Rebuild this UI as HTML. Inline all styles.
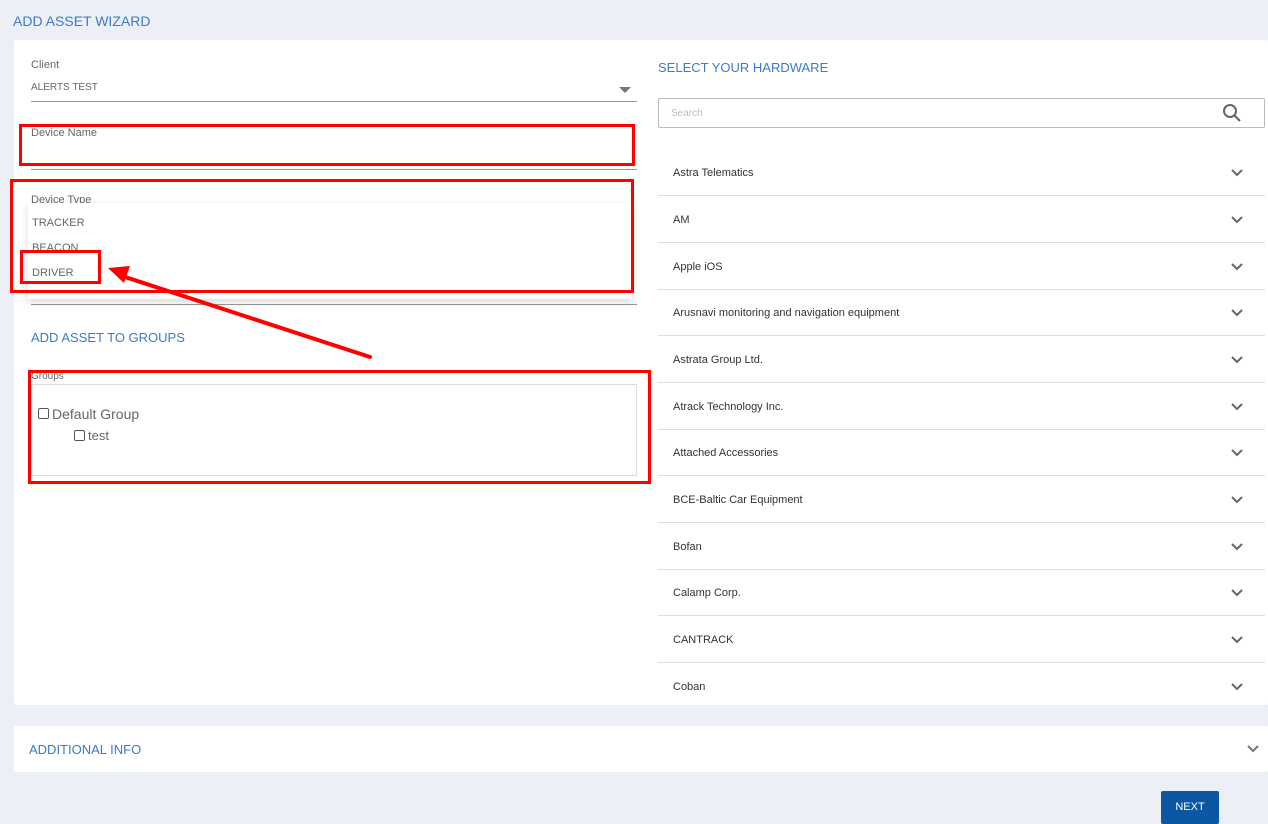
<!DOCTYPE html>
<html><head><style>
*{box-sizing:border-box;margin:0;padding:0}
body{width:1268px;height:824px;background:#eceff6;font-family:"Liberation Sans",sans-serif;position:relative;overflow:hidden;color:#555}
.a{position:absolute}
.blue{color:#3d7bc7}
.lbl{font-size:11px;color:#666}
.row{position:absolute;left:658px;width:607px;height:47px;border-bottom:1px solid #ddd;font-size:11px;color:#333}
.row span{position:absolute;left:15px;top:18px}
.row svg{position:absolute;right:22px;top:20px}
.red{position:absolute;border:3px solid #f00}
</style></head><body>
<div class="a blue" style="left:13px;top:13px;font-size:14px">ADD ASSET WIZARD</div>
<div class="a" style="left:14px;top:40px;width:1254px;height:665px;background:#fff;border-radius:2px"></div>
<div class="a" style="left:14px;top:726px;width:1254px;height:46px;background:#fff;border-radius:2px"></div>
<div class="a blue" style="left:29px;top:742px;font-size:13px">ADDITIONAL INFO</div>
<svg class="a" style="left:1247px;top:745px" width="12" height="8"><path d="M1 1l5 5 5-5" stroke="#777" stroke-width="2" fill="none"/></svg>
<div class="a" style="left:1161px;top:791px;width:58px;height:33px;background:#0b57a4;color:#fff;font-size:11px;text-align:center;line-height:33px;border-radius:2px">NEXT</div>

<div class="a lbl" style="left:31px;top:59px">Client</div>
<div class="a" style="left:31px;top:82px;font-size:10px;color:#666">ALERTS TEST</div>
<svg class="a" style="left:619px;top:87px" width="12" height="7"><path d="M0 0h12L6 6z" fill="#777"/></svg>
<div class="a" style="left:31px;top:101px;width:606px;height:1px;background:#999"></div>
<div class="a lbl" style="left:31px;top:127px">Device Name</div>
<div class="a" style="left:31px;top:169px;width:606px;height:1px;background:#999"></div>
<div class="a lbl" style="left:31px;top:194px">Device Type</div>
<div class="a" style="left:31px;top:304px;width:606px;height:1px;background:#999"></div>
<div class="a" style="left:28px;top:203px;width:604px;height:96px;background:#fff;box-shadow:0 3px 8px rgba(0,0,0,.15)"></div>
<div class="a" style="left:32px;top:217px;font-size:11px;color:#666">TRACKER</div>
<div class="a" style="left:32px;top:242px;font-size:11px;color:#666">BEACON</div>
<div class="a" style="left:32px;top:267px;font-size:11px;color:#666">DRIVER</div>
<div class="a blue" style="left:31px;top:330px;font-size:13px">ADD ASSET TO GROUPS</div>
<div class="a lbl" style="left:31px;top:371px;font-size:10px">Groups</div>
<div class="a" style="left:31px;top:384px;width:606px;height:92px;border:1px solid #ddd"></div>
<div class="a" style="left:38px;top:408px;width:11px;height:11px;border:1px solid #555;border-radius:2px"></div>
<div class="a" style="left:52px;top:406px;font-size:14px;color:#666">Default Group</div>
<div class="a" style="left:74px;top:430px;width:11px;height:11px;border:1px solid #555;border-radius:2px"></div>
<div class="a" style="left:88px;top:428px;font-size:13px;color:#666">test</div>

<div class="red" style="left:19px;top:124px;width:616px;height:42px"></div>
<div class="red" style="left:10px;top:179px;width:624px;height:114px"></div>
<div class="red" style="left:20px;top:250px;width:81px;height:34px"></div>
<div class="red" style="left:28px;top:370px;width:623px;height:114px"></div>
<svg class="a" style="left:0;top:0" width="1268" height="824"><line x1="370" y1="357" x2="122" y2="276" stroke="#f00" stroke-width="4" stroke-linecap="round"/><path d="M108 268L130 266 124 283z" fill="#f00"/></svg>

<div class="a blue" style="left:658px;top:60px;font-size:13px">SELECT YOUR HARDWARE</div>
<div class="a" style="left:658px;top:98px;width:607px;height:30px;border:1px solid #bbb;border-radius:2px"></div>
<div class="a" style="left:671px;top:108px;font-size:10px;color:#bbb">Search</div>
<svg class="a" style="left:1222px;top:103px" width="20" height="20"><circle cx="8" cy="8" r="6" stroke="#666" stroke-width="2" fill="none"/><path d="M12.5 12.5l5.5 5.5" stroke="#666" stroke-width="2.2"/></svg>

<div class="row" style="top:149px"><span>Astra Telematics</span><svg width="12" height="8"><path d="M1 1l5 5 5-5" stroke="#666" stroke-width="2" fill="none"/></svg></div>
<div class="row" style="top:196px"><span>AM</span><svg width="12" height="8"><path d="M1 1l5 5 5-5" stroke="#666" stroke-width="2" fill="none"/></svg></div>
<div class="row" style="top:243px"><span>Apple iOS</span><svg width="12" height="8"><path d="M1 1l5 5 5-5" stroke="#666" stroke-width="2" fill="none"/></svg></div>
<div class="row" style="top:289px"><span>Arusnavi monitoring and navigation equipment</span><svg width="12" height="8"><path d="M1 1l5 5 5-5" stroke="#666" stroke-width="2" fill="none"/></svg></div>
<div class="row" style="top:336px"><span>Astrata Group Ltd.</span><svg width="12" height="8"><path d="M1 1l5 5 5-5" stroke="#666" stroke-width="2" fill="none"/></svg></div>
<div class="row" style="top:383px"><span>Atrack Technology Inc.</span><svg width="12" height="8"><path d="M1 1l5 5 5-5" stroke="#666" stroke-width="2" fill="none"/></svg></div>
<div class="row" style="top:429px"><span>Attached Accessories</span><svg width="12" height="8"><path d="M1 1l5 5 5-5" stroke="#666" stroke-width="2" fill="none"/></svg></div>
<div class="row" style="top:476px"><span>BCE-Baltic Car Equipment</span><svg width="12" height="8"><path d="M1 1l5 5 5-5" stroke="#666" stroke-width="2" fill="none"/></svg></div>
<div class="row" style="top:523px"><span>Bofan</span><svg width="12" height="8"><path d="M1 1l5 5 5-5" stroke="#666" stroke-width="2" fill="none"/></svg></div>
<div class="row" style="top:569px"><span>Calamp Corp.</span><svg width="12" height="8"><path d="M1 1l5 5 5-5" stroke="#666" stroke-width="2" fill="none"/></svg></div>
<div class="row" style="top:616px"><span>CANTRACK</span><svg width="12" height="8"><path d="M1 1l5 5 5-5" stroke="#666" stroke-width="2" fill="none"/></svg></div>
<div class="row" style="top:663px;border-bottom:none"><span>Coban</span><svg width="12" height="8"><path d="M1 1l5 5 5-5" stroke="#666" stroke-width="2" fill="none"/></svg></div>
</body></html>
